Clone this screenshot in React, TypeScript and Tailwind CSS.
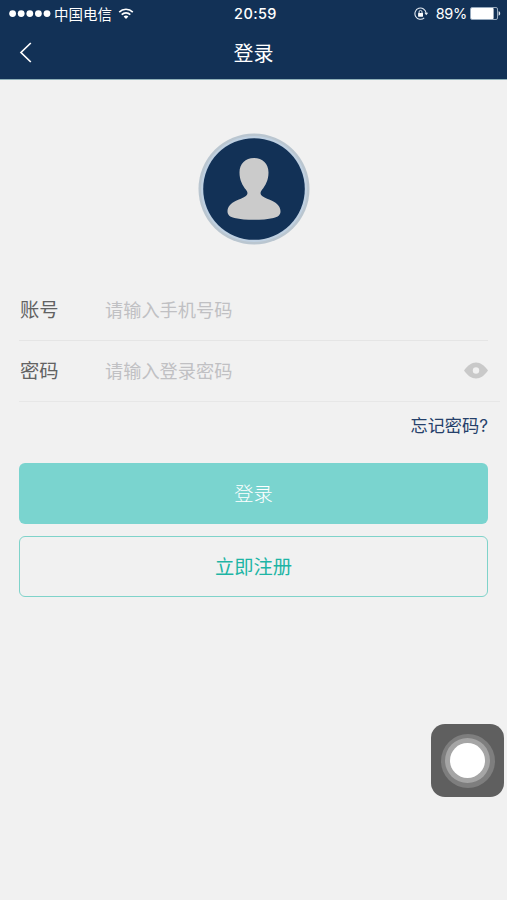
import { useState } from 'react';

interface FieldProps {
  label: string;
  placeholder: string;
  type?: string;
  value: string;
  onChange: (value: string) => void;
}

function SignalDots() {
  return (
    <svg className="w-[42px] h-2" viewBox="0 0 42 8" fill="white">
      {[0, 1, 2, 3, 4].map((i) => (
        <circle key={i} cx={3.6 + i * 8.6} cy={3.6} r={3.4} />
      ))}
    </svg>
  );
}

function WifiIcon() {
  return (
    <svg className="w-4 h-3" viewBox="0 0 16 12" fill="none" stroke="white" strokeWidth={1.6}>
      <path d="M1.2 4.1a9.6 9.6 0 0 1 13.6 0" />
      <path d="M3.7 6.6a6.1 6.1 0 0 1 8.6 0" />
      <path d="M8 11.1L5.6 8.6a3.4 3.4 0 0 1 4.8 0z" fill="white" stroke="none" />
    </svg>
  );
}

function RotationLockIcon() {
  return (
    <svg className="w-[15px] h-[14px]" viewBox="0 0 15 14" fill="none" stroke="#e3eaf2">
      <path d="M10.2 10.9A5.6 5.6 0 1 1 12.1 6" strokeWidth={1.1} />
      <path d="M10.4 5.8h3.8l-1.9 2.5z" fill="#e3eaf2" stroke="none" />
      <rect x={4.1} y={5.9} width={4.9} height={3.8} rx={0.4} fill="white" stroke="none" />
      <path d="M5.1 6.1V4.9a1.45 1.45 0 0 1 2.9 0v1.2" strokeWidth={1} />
    </svg>
  );
}

function BatteryIcon() {
  return (
    <svg className="w-[31px] h-[13px]" viewBox="0 0 31 13">
      <rect x={0.5} y={0.5} width={27} height={12} rx={1.5} fill="none" stroke="#b9c8d8" strokeWidth={0.8} />
      <rect x={1} y={1} width={22.6} height={11} rx={0.8} fill="white" />
      <path d="M28.6 4.3c1.2.4 1.6 1.2 1.6 2.2s-.4 1.800-1.600 2.200z" fill="#dfe7ef" />
    </svg>
  );
}

function StatusBar() {
  return (
    <div className="grid grid-cols-[1fr_auto_1fr] items-center h-[27px] pl-[9px] pr-[6px]">
      <div className="flex items-center">
        <SignalDots />
        <span className="ml-[3px] pt-[3px] text-[14.5px] leading-none">中国电信</span>
        <span className="ml-1.5"><WifiIcon /></span>
      </div>
      <span className="pt-[2px] pl-px text-[14.5px] leading-none font-medium tracking-[0.4px]">20:59</span>
      <div className="flex items-center justify-end">
        <RotationLockIcon />
        <span className="ml-[7px] mr-[3px] pt-[2px] text-[14.5px] leading-none tracking-[-0.3px]">89%</span>
        <BatteryIcon />
      </div>
    </div>
  );
}

function Avatar() {
  return (
    <svg className="w-28 h-28" viewBox="0 0 112 112">
      <circle cx={56} cy={56} r={55.5} fill="#bac6d0" />
      <circle cx={56} cy={56} r={53} fill="#bfd0e1" />
      <circle cx={56} cy={56} r={50.8} fill="#123156" />
      <path
        d="M56 25C64.5 25 70.5 30.5 70.5 39.5C70.5 47 67.5 52.5 64 56.8C62 59.500 62 61.500 64.500 63.200C67 65 71 66.200 74.500 68C79.500 70.500 82.500 74 82.500 78.500C82.500 82 80 84 75.500 85C70 86.300 63 86.800 56 86.800C49 86.800 42 86.300 36.500 85C32 84 29.500 82 29.500 78.500C29.500 74 32.500 70.500 37.500 68C41 66.200 45 65 47.500 63.200C50 61.500 50 59.500 48 56.800C44.500 52.500 41.500 47 41.500 39.500C41.500 30.500 47.500 25 56 25Z"
        fill="#cbcbcb"
      />
    </svg>
  );
}

function Field({ label, placeholder, type = 'text', value, onChange }: FieldProps) {
  return (
    <label className="flex flex-1 items-center pt-px pl-px">
      <span className="w-[85px] text-[19.3px] text-[#626262]">{label}</span>
      <input
        type={type}
        value={value}
        placeholder={placeholder}
        onChange={(e) => onChange(e.target.value)}
        className="w-[250px] bg-transparent outline-none text-[18.2px] text-[#333] placeholder:text-[#c0c0c3]"
      />
    </label>
  );
}

export default function App() {
  const [account, setAccount] = useState('');
  const [password, setPassword] = useState('');
  const [visible, setVisible] = useState(false);

  return (
    <div className="relative h-[900px] w-[507px] overflow-hidden bg-[#f1f1f1] font-[Inter,'Noto_Sans_CJK_SC',sans-serif]">
      <header className="h-20 bg-[#123156] text-white border-b border-[#8fb0b8]">
        <StatusBar />
        <div className="grid grid-cols-[1fr_auto_1fr] items-center h-[52px] px-[19px]">
          <button>
            <svg className="w-[14px] h-[22px]" viewBox="0 0 14 22" fill="none" stroke="white" strokeWidth={1.7}>
              <path d="M11.8 1L2 10.5l9.8 9.5" />
            </svg>
          </button>
          <h1 className="pt-[2px] text-[20px]">登录</h1>
        </div>
      </header>

      <main>
        <div className="flex justify-center pt-[53px] pb-[35px]">
          <Avatar />
        </div>

        <div className="ml-[19px]">
          <div className="flex h-[61px] mr-[19px] border-b border-[#e5e5e5]">
            <Field label="账号" placeholder="请输入手机号码" value={account} onChange={setAccount} />
          </div>
          <div className="flex items-center h-[61px] mr-[7px] pr-3 border-b border-[#e7e7e7]">
            <Field
              label="密码"
              placeholder="请输入登录密码"
              type={visible ? 'text' : 'password'}
              value={password}
              onChange={setPassword}
            />
            <button onClick={() => setVisible(!visible)}>
              <svg className="w-6 h-[18px]" viewBox="0 0 24 18">
                <path d="M0 8.5C3.5 3.5 7.5.5 12 .5S20.5 3.5 24 8.5c-3.5 5-7.5 8-12 8S3.5 13.5 0 8.5z" fill="#c9c9c9" />
                <circle cx={12} cy={8.5} r={3.2} fill="#f1f1f1" />
              </svg>
            </button>
          </div>
        </div>

        <div className="mx-[19px]">
          <div className="flex justify-end h-[61px] pt-[12px]">
            <a className="text-[17.2px] leading-[24px] text-[#25406a]">忘记密码?</a>
          </div>
          <button className="block w-full h-[61px] pt-px rounded-md bg-[#7ad4cf] text-white text-[19.3px] font-light">登录</button>
          <button className="block w-full h-[61px] mt-3 pt-[2px] rounded-md border border-[#7fd3ca] text-[#1eb5a5] text-[19.3px]">
            立即注册
          </button>
        </div>
      </main>

      {/* AssistiveTouch */}
      <div className="absolute left-[431px] top-[724px] w-[73px] h-[73px] rounded-[14px] bg-[#5f5f5f] flex items-center justify-center">
        <div className="w-[54px] h-[54px] rounded-full bg-[#7e7e7e] flex items-center justify-center">
          <div className="w-[45px] h-[45px] rounded-full bg-[#a5a5a5] flex items-center justify-center">
            <div className="w-[35px] h-[35px] rounded-full bg-white"></div>
          </div>
        </div>
      </div>
    </div>
  );
}
